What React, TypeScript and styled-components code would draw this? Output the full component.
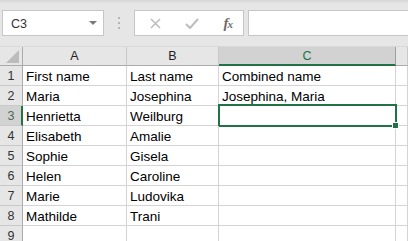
import styled, { createGlobalStyle } from 'styled-components'

const GlobalStyle = createGlobalStyle`
  html, body {
    margin: 0;
    padding: 0;
    background: #ffffff;
    overflow: hidden;
  }
  * {
    box-sizing: border-box;
  }
`

const columns = ['A', 'B', 'C']
const widths = [104, 92, 177]

const rows: [string, string, string][] = [
  ['First name', 'Last name', 'Combined name'],
  ['Maria', 'Josephina', 'Josephina, Maria'],
  ['Henrietta', 'Weilburg', ''],
  ['Elisabeth', 'Amalie', ''],
  ['Sophie', 'Gisela', ''],
  ['Helen', 'Caroline', ''],
  ['Marie', 'Ludovika', ''],
  ['Mathilde', 'Trani', ''],
  ['', '', ''],
]

const activeCol = 2
const activeRow = 2

export default function App() {
  return (
    <>
      <GlobalStyle />
      <Window>
        <Toolbar>
          <NameBox>
            <NameText>C3</NameText>
            <DropArrow />
          </NameBox>
          <Grip>
            <Dot />
            <Dot />
            <Dot />
          </Grip>
          <FormulaButtons>
            <svg width="11" height="11" viewBox="0 0 11 11">
              <path d="M1 1 L10 10 M10 1 L1 10" stroke="#bdbdbd" strokeWidth="1.5" fill="none" />
            </svg>
            <svg width="14" height="11" viewBox="0 0 14 11">
              <path d="M1 6 L5 10 L13 1" stroke="#bdbdbd" strokeWidth="2" fill="none" />
            </svg>
            <FxLabel>
              f<span>x</span>
            </FxLabel>
          </FormulaButtons>
          <FormulaInput />
        </Toolbar>

        <Sheet>
          <CornerCell>
            <svg width="13" height="13" viewBox="0 0 13 13">
              <polygon points="13,0 13,13 0,13" fill="#bcbcbc" />
            </svg>
          </CornerCell>
          {columns.map((c, i) => (
            <ColHeader key={c} $active={i === activeCol}>
              {c}
            </ColHeader>
          ))}
          <ColHeader $active={false} />

          {rows.map((r, ri) => (
            <Row key={ri} r={r} index={ri} />
          ))}
        </Sheet>
      </Window>
    </>
  )
}

const Row = ({ r, index }: { r: [string, string, string]; index: number }) => (
  <>
    <RowHeader $active={index === activeRow}>{index + 1}</RowHeader>
    {r.map((v, ci) => (
      <Cell key={ci} $selected={index === activeRow && ci === activeCol}>
        {v}
        {index === activeRow && ci === activeCol && <FillHandle />}
      </Cell>
    ))}
    <Cell $selected={false} />
  </>
)

const Window = styled.div`
  width: 408px;
  height: 241px;
  overflow: hidden;
  background: #ffffff;
  font-family: 'Liberation Sans', Arial, sans-serif;
`

const Toolbar = styled.div`
  display: flex;
  align-items: center;
  height: 47px;
  padding: 0 0 0 2px;
  background: linear-gradient(#d6d6d6 0px, #e6e6e6 4px, #e6e6e6 100%);
  border-bottom: 1px solid #d9d9d9;
`

const NameBox = styled.div`
  display: flex;
  align-items: center;
  justify-content: space-between;
  width: 102px;
  height: 26px;
  padding: 0 6px 0 8px;
  background: #ffffff;
  border: 1px solid #c6c6c6;
`

const NameText = styled.span`
  font-size: 12.5px;
  color: #333333;
  padding-top: 1px;
`

const DropArrow = styled.span`
  width: 0;
  height: 0;
  border-left: 4px solid transparent;
  border-right: 4px solid transparent;
  border-top: 4px solid #7a7a7a;
`

const Grip = styled.div`
  display: flex;
  flex-direction: column;
  align-items: center;
  gap: 3px;
  width: 30px;
`

const Dot = styled.span`
  width: 2px;
  height: 2px;
  background: #b4b4b4;
`

const FormulaButtons = styled.div`
  display: flex;
  align-items: center;
  justify-content: space-between;
  width: 110px;
  height: 26px;
  padding: 0 10px 0 15px;
  background: #ffffff;
  border: 1px solid #c6c6c6;
`

const FxLabel = styled.span`
  font-family: 'Liberation Serif', 'Times New Roman', serif;
  font-style: italic;
  font-weight: bold;
  font-size: 15px;
  color: #6e6e6e;

  span {
    font-size: 11px;
    margin-left: -1px;
  }
`

const FormulaInput = styled.div`
  flex: 1;
  height: 26px;
  margin-left: 4px;
  background: #ffffff;
  border: 1px solid #c6c6c6;
  border-right: none;
`

const Sheet = styled.div`
  display: grid;
  grid-template-columns: 23px ${widths.map((w) => `${w}px`).join(' ')} 1fr;
  grid-template-rows: 19px;
  grid-auto-rows: 20px;
`

const CornerCell = styled.div`
  display: flex;
  align-items: flex-end;
  justify-content: flex-end;
  padding: 0 3px 2px 0;
  background: #e6e6e6;
  border-right: 1px solid #ababab;
  border-bottom: 1px solid #ababab;
`

const ColHeader = styled.div<{ $active: boolean }>`
  display: flex;
  align-items: center;
  justify-content: center;
  font-size: 12.5px;
  color: ${({ $active }) => ($active ? '#217346' : '#222222')};
  background: ${({ $active }) => ($active ? '#d2d2d2' : '#e6e6e6')};
  border-right: 1px solid ${({ $active }) => ($active ? '#9e9e9e' : '#c8c8c8')};
  border-bottom: ${({ $active }) => ($active ? '2px solid #217346' : '1px solid #ababab')};
  padding-top: ${({ $active }) => ($active ? '1px' : '0')};
`

const RowHeader = styled.div<{ $active: boolean }>`
  display: flex;
  align-items: center;
  justify-content: center;
  font-size: 12.5px;
  padding-top: 1px;
  color: ${({ $active }) => ($active ? '#4a6b58' : '#333333')};
  background: ${({ $active }) => ($active ? '#d2d2d2' : '#e6e6e6')};
  border-right: ${({ $active }) => ($active ? '2px solid #217346' : '1px solid #ababab')};
  border-bottom: 1px solid #c8c8c8;
  padding-left: ${({ $active }) => ($active ? '1px' : '0')};
`

const Cell = styled.div<{ $selected: boolean }>`
  position: relative;
  display: flex;
  align-items: flex-end;
  padding: 0 3px 1px 3px;
  font-size: 13.5px;
  line-height: 15px;
  color: #000000;
  white-space: nowrap;
  border-right: 1px solid #d4d4d4;
  border-bottom: 1px solid #d4d4d4;

  ${({ $selected }) =>
    $selected &&
    `
    &::after {
      content: '';
      position: absolute;
      top: -2px;
      left: -1px;
      right: -2px;
      bottom: -2px;
      border: 2px solid #217346;
    }
  `}
`

const FillHandle = styled.span`
  position: absolute;
  right: -4px;
  bottom: -4px;
  width: 7px;
  height: 7px;
  background: #217346;
  border: 1px solid #ffffff;
  z-index: 2;
`
